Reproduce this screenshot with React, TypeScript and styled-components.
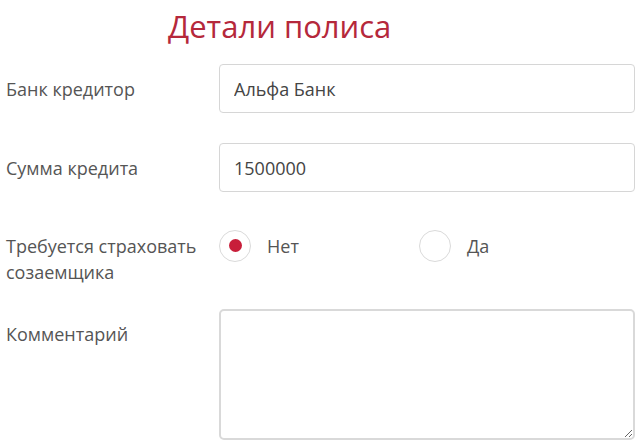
import React, { useState } from "react";
import styled, { createGlobalStyle } from "styled-components";

const GlobalStyle = createGlobalStyle`
  html, body {
    margin: 0;
    padding: 0;
    background: #ffffff;
  }
  body {
    font-family: "Open Sans", "Noto Sans", sans-serif;
  }
`;

const SForm = styled.form`
  width: 640px;
  height: 447px;
  box-sizing: border-box;
  padding: 0 5px 0 6px;
  overflow: hidden;
`;

const STitle = styled.h2`
  margin: 0;
  padding: 6px 0 0 162px;
  height: 64px;
  box-sizing: border-box;
  font-size: 31px;
  line-height: 40px;
  font-weight: 400;
  color: #b5283b;
`;

const SRow = styled.div<{ $gap: number }>`
  display: grid;
  grid-template-columns: 213px 1fr;
  align-items: start;
  margin-bottom: ${({ $gap }) => $gap}px;
`;

const SLabel = styled.label`
  padding-top: 12px;
  font-size: 18px;
  line-height: 26px;
  color: #555555;
`;

const SInput = styled.input`
  display: block;
  width: 100%;
  height: 49px;
  box-sizing: border-box;
  padding: 0 14px;
  border: 1px solid #d6d6d6;
  border-radius: 4px;
  font-family: "Open Sans", "Noto Sans", sans-serif;
  font-size: 18px;
  color: #444444;
  background: #fff;
  outline: none;
`;

const STextArea = styled.textarea`
  display: block;
  width: 100%;
  height: 131px;
  box-sizing: border-box;
  padding: 10px 14px;
  border: 2px solid #d9d9d9;
  border-radius: 5px;
  font-family: "Open Sans", "Noto Sans", sans-serif;
  font-size: 18px;
  color: #444444;
  resize: vertical;
  outline: none;
`;

const SRadioGroup = styled.div`
  display: flex;
  height: 49px;
  align-items: center;
`;

const SRadioOption = styled.label`
  display: flex;
  align-items: center;
  width: 200px;
  cursor: pointer;
  font-size: 18px;
  color: #555555;
`;

const SCircle = styled.span<{ $checked: boolean }>`
  width: 32px;
  height: 32px;
  box-sizing: border-box;
  border: 1px solid #dadada;
  border-radius: 50%;
  display: flex;
  align-items: center;
  justify-content: center;
  margin-right: 16px;

  &::after {
    content: "";
    width: 13px;
    height: 13px;
    border-radius: 50%;
    background: #c81e3a;
    display: ${({ $checked }) => ($checked ? "block" : "none")};
  }
`;

const SHiddenRadio = styled.input`
  display: none;
`;

export default function App() {
  const [coBorrower, setCoBorrower] = useState("no");

  return (
    <>
      <GlobalStyle />
      <SForm>
        <STitle>Детали полиса</STitle>
        <SRow $gap={30}>
          <SLabel>Банк кредитор</SLabel>
          <SInput defaultValue="Альфа Банк" />
        </SRow>
        <SRow $gap={29}>
          <SLabel>Сумма кредита</SLabel>
          <SInput defaultValue="1500000" />
        </SRow>
        <SRow $gap={24}>
          <SLabel>
            Требуется страховать
            <br />
            созаемщика
          </SLabel>
          <SRadioGroup>
            <SRadioOption>
              <SHiddenRadio
                type="radio"
                name="co"
                checked={coBorrower === "no"}
                onChange={() => setCoBorrower("no")}
              />
              <SCircle $checked={coBorrower === "no"} />
              Нет
            </SRadioOption>
            <SRadioOption>
              <SHiddenRadio
                type="radio"
                name="co"
                checked={coBorrower === "yes"}
                onChange={() => setCoBorrower("yes")}
              />
              <SCircle $checked={coBorrower === "yes"} />
              Да
            </SRadioOption>
          </SRadioGroup>
        </SRow>
        <SRow $gap={0}>
          <SLabel>Комментарий</SLabel>
          <STextArea />
        </SRow>
      </SForm>
    </>
  );
}
